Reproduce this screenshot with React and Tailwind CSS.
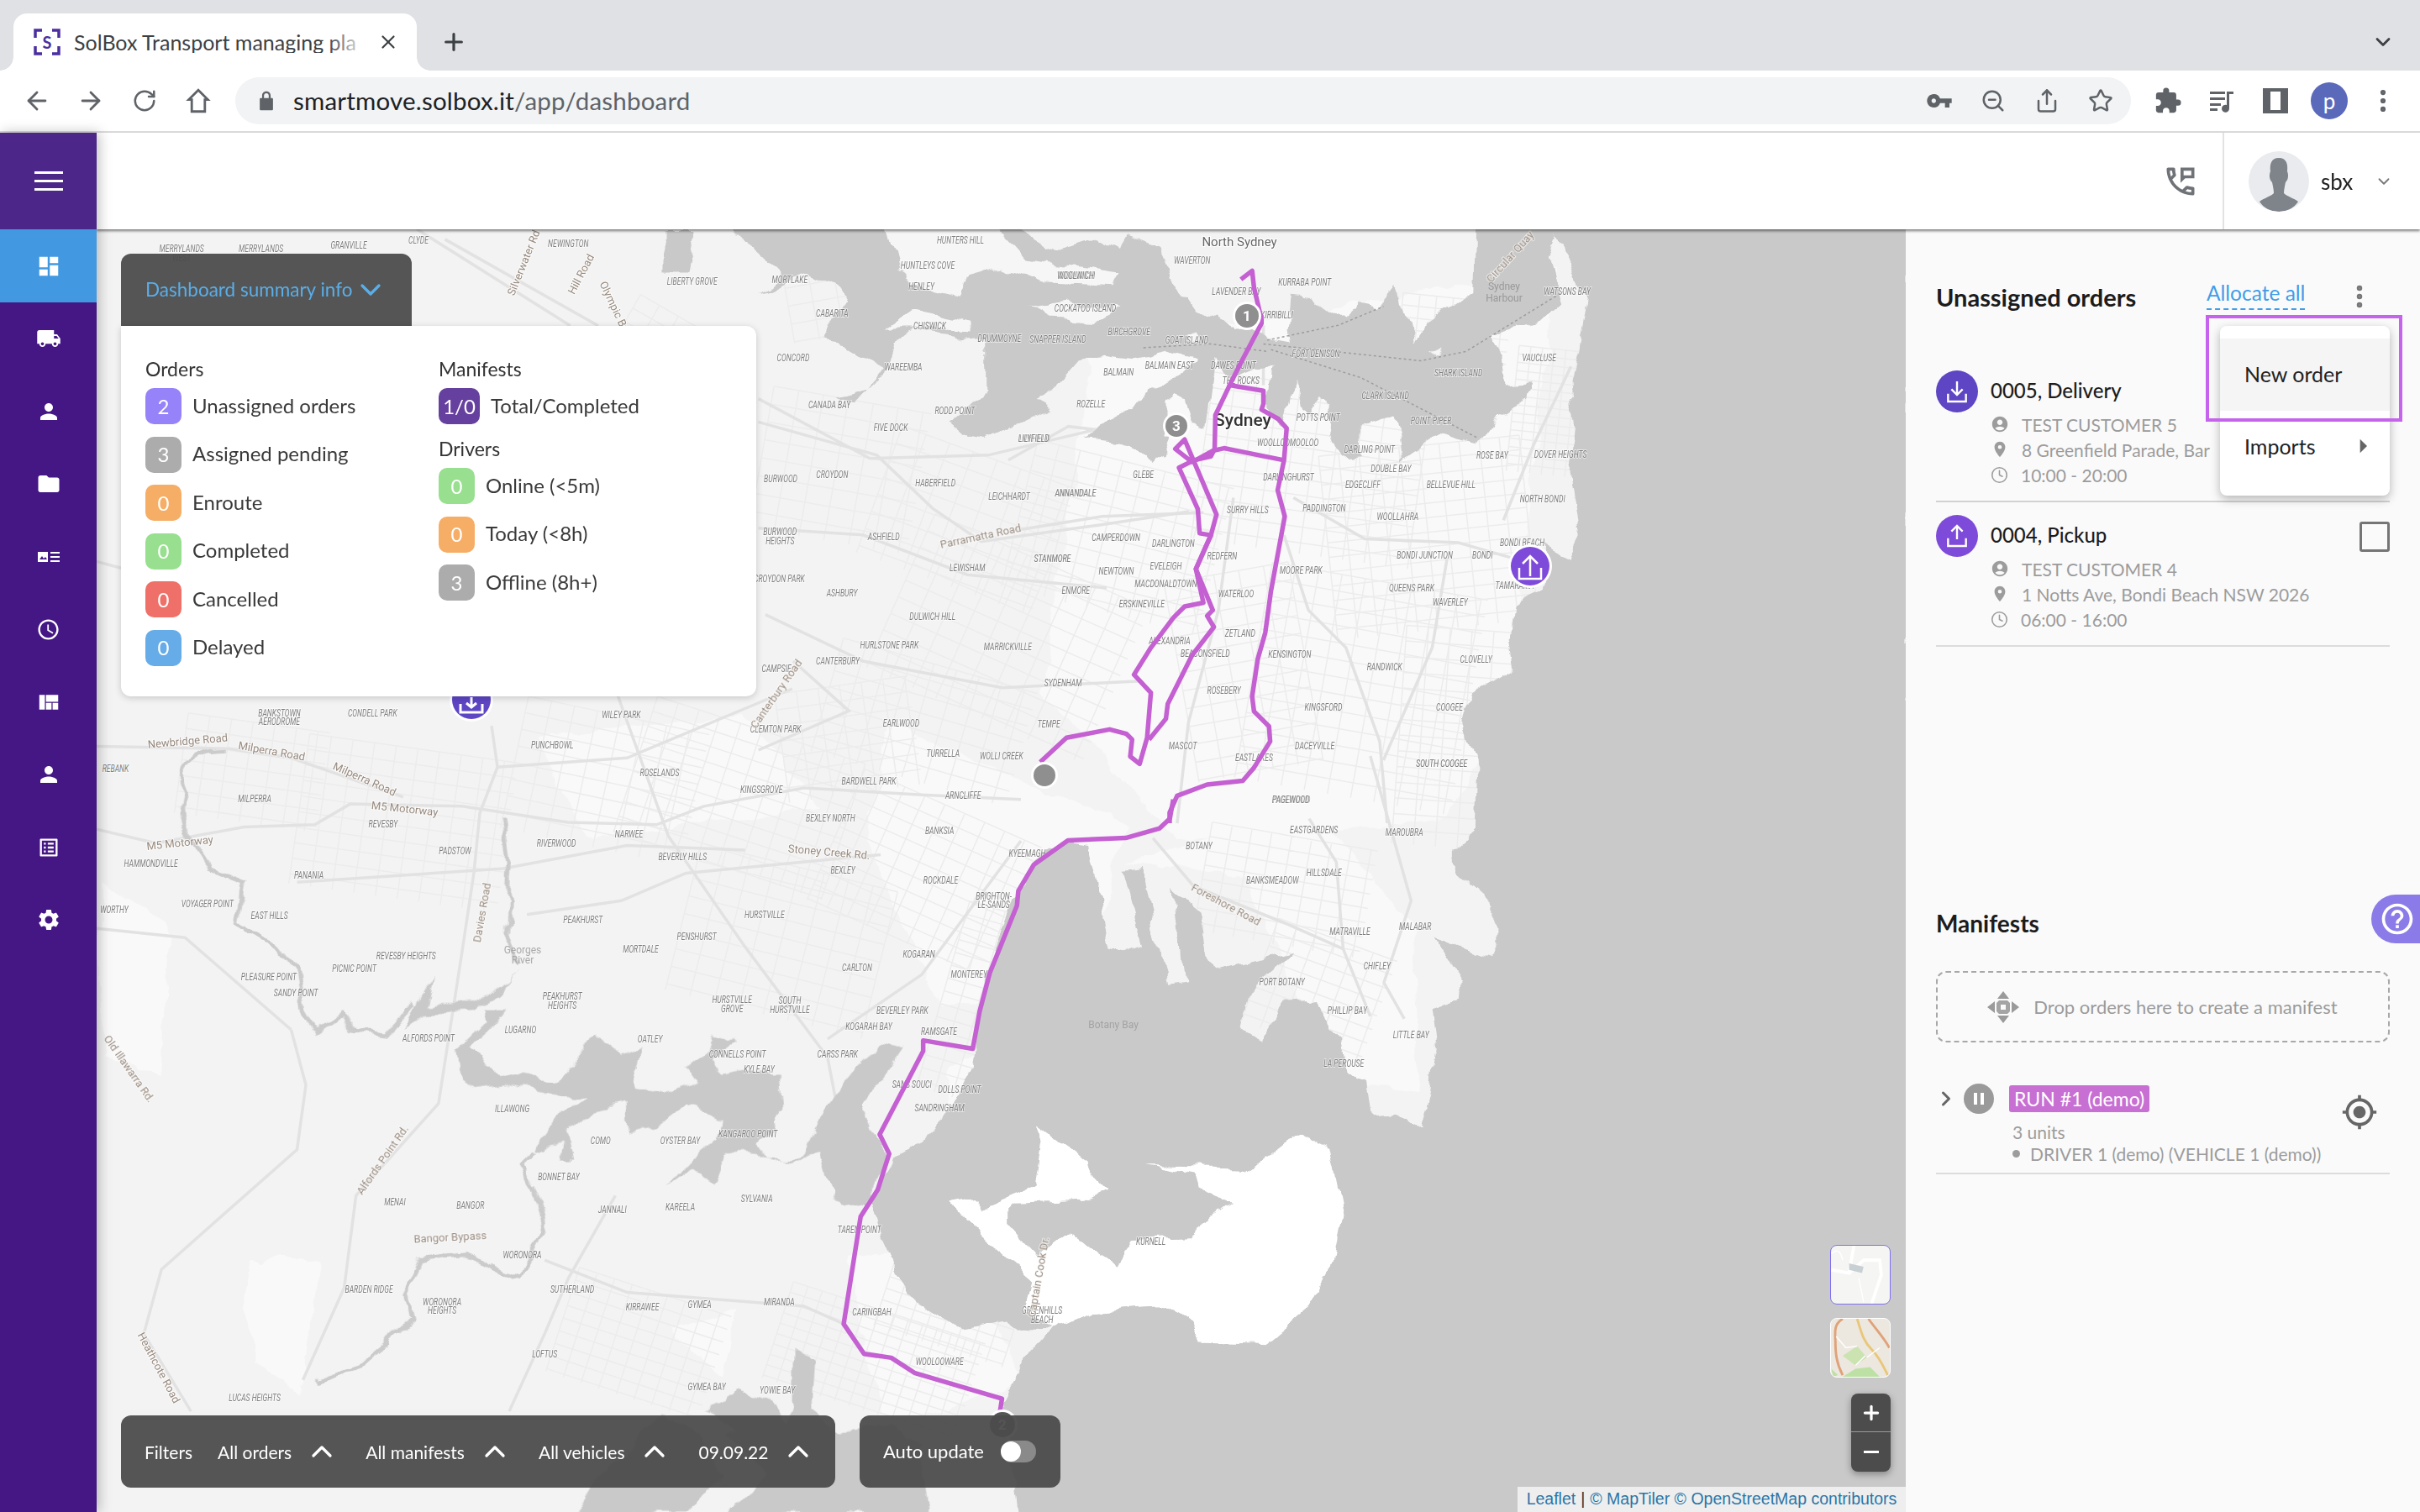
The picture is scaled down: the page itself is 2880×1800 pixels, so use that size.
import {
  ArrowLeft,
  ArrowRight,
  ChevronDown,
  ChevronRight,
  ChevronUp,
  Clock,
  MoreVertical,
  Plus,
  RotateCw,
  Share,
  Star,
  X,
  ZoomOut,
} from 'lucide-react'
import {
  MdAccessTime,
  MdAccountCircle,
  MdArrowRight,
  MdDashboard,
  MdExtension,
  MdFolder,
  MdGpsFixed,
  MdHelpOutline,
  MdLocalShipping,
  MdLocationOn,
  MdOutlineListAlt,
  MdOutlinePermPhoneMsg,
  MdPause,
  MdPerson,
  MdSettings,
  MdViewQuilt,
  MdVpnKey,
} from 'react-icons/md'

// map pieces are kept in the coordinates they were measured in, each set has its own transform
const frames = {
  north: { x: 1200, y: 280, sx: 0.4464, sy: 0.4464 },
  south: { x: 115, y: 820, sx: 0.7015, sy: 0.5485 },
  bay: { x: 1000, y: 900, sx: 0.8087, sy: 0.574 },
  west: { x: 115, y: 273, sx: 0.829, sy: 0.3954 },
  hacking: { x: 100, y: 1440, sx: 0.765, sy: 0.3333 },
}

const frameTransform = (name) => {
  const f = frames[name]
  return `translate(${f.x} ${f.y}) scale(${f.sx} ${f.sy})`
}

const water = {
  north: [
    'M1460,5 L1500,70 L1545,170 L1530,260 L1500,380 L1510,520 L1495,640 L1525,800 L1495,860 L1430,830 L1420,950 L1345,985 L1335,1060 L1350,1150 L1300,1180 L1230,1230 L1210,1300 L1250,1430 L1245,1590 L2400,1590 L2400,-60 L1462,-60 Z',
    'M-60,130 L60,185 L130,150 L240,130 L300,110 L290,50 L310,0 L400,30 L440,120 L480,190 L560,215 L610,260 L650,250 L670,270 L750,285 L745,250 L755,165 L820,170 L890,225 L935,185 L985,195 L1040,130 L1080,290 L1100,245 L1180,190 L1235,150 L1240,-60 L1462,-60 L1460,5 L1440,60 L1470,190 L1440,215 L1400,235 L1290,265 L1320,330 L1330,400 L1395,395 L1385,440 L1300,480 L1250,560 L1150,535 L1090,570 L1045,600 L1025,480 L940,510 L945,585 L890,590 L830,430 L800,490 L770,385 L740,500 L690,460 L700,340 L670,345 L590,380 L550,320 L530,470 L525,520 L490,510 L470,430 L450,410 L420,430 L420,500 L410,560 L380,610 L350,545 L215,540 L280,485 L340,470 L390,400 L470,370 L500,335 L420,310 L330,330 L260,320 L190,330 L130,400 L60,440 L0,470 L-60,450 Z',
  ],
  west: [
    'M810,0 L860,0 L850,130 L810,130 Z',
    'M890,-30 L950,60 L985,130 L950,200 L1020,130 L1060,170 L1075,220 L1045,340 L1075,350 L1130,420 L1110,480 L1060,500 L1090,520 L1135,430 L1150,330 L1170,300 L1190,320 L1240,330 L1290,320 L1300,290 L1380,270 L1450,300 L1500,310 L1568,380 L1600,300 L1568,200 L1520,190 L1470,160 L1480,70 L1440,30 L1380,70 L1300,-30 Z',
    'M1225,580 L1300,440 L1340,420 L1310,470 L1370,540 L1280,630 L1250,620 Z',
    'M1420,630 L1480,590 L1540,620 L1530,690 L1470,640 Z',
  ],
  south: [
    'M620,850 L610,790 L650,740 L665,720 L660,690 L700,690 L670,740 L635,780 L660,830 L740,845 L790,850 L820,800 L840,750 L870,780 L890,800 L925,780 L910,830 L915,870 L960,880 L1020,855 L1000,820 L1040,780 L1050,745 L1085,770 L1040,800 L1060,840 L1100,830 L1160,830 L1165,920 L1120,990 L1140,1020 L1200,1010 L1240,905 L1265,860 L1290,820 L1340,760 L1365,770 L1340,850 L1300,900 L1340,1010 L1300,1130 L1250,1110 L1230,1010 L1180,1020 L1110,1010 L1070,1010 L1050,1080 L1010,1040 L965,1085 L1010,1020 L1050,980 L1060,930 L1000,900 L950,950 L905,965 L900,900 L840,915 L800,960 L810,1020 L790,1020 L795,985 L740,1005 L790,920 L830,885 L770,880 L700,860 L640,870 Z',
    'M520,740 L545,680 L570,620 L560,680 L640,680 L700,640 L720,610 L690,660 L640,695 L560,700 Z',
  ],
  bay: [
    'M935,-10 L940,100 L958,120 L905,190 L905,240 L960,310 L960,415 L870,370 L912,470 L910,510 L870,530 L878,600 L870,690 L855,780 L820,740 L782,745 L775,670 L745,655 L738,590 L715,560 L700,500 L660,505 L620,590 L595,568 L610,470 L665,405 L548,445 L530,320 L490,270 L505,470 L480,475 L445,235 L415,240 L445,395 L420,410 L395,400 L365,185 L335,178 L285,225 L262,285 L220,450 L205,530 L195,640 L150,760 L120,800 L75,825 L45,930 L100,1120 L170,1185 L245,1170 L260,1185 L310,1190 L270,1260 L240,1340 L262,1590 L1600,1590 L1600,-10 Z',
  ],
  hacking: [
    'M1000,1090 L1060,950 L1000,800 L1020,790 L960,720 L1000,690 L1010,640 L1060,680 L1090,760 L1100,700 L1100,500 L1140,540 L1135,720 L1180,800 L1200,780 L1260,750 L1270,800 L1300,840 L1320,1090 Z',
    'M760,1090 L790,980 L900,720 L960,790 L990,960 L940,1090 Z',
  ],
}

// peninsulas and islands that sit on top of the water shapes
const landOverWater = {
  west: [
    'M1130,-30 L1280,-30 L1330,90 L1400,110 L1470,130 L1460,170 L1360,160 L1300,110 L1250,140 L1240,200 L1200,180 L1150,130 Z',
    'M1130,300 L1170,240 L1260,280 L1260,310 L1170,300 Z',
    'M1340,230 L1400,215 L1470,240 L1440,270 L1370,265 Z',
  ],
  north: [
    'M160,205 L205,190 L250,210 L230,235 L175,230 Z',
    'M470,272 L495,265 L510,285 L480,295 Z',
    'M1120,300 L1150,295 L1145,320 Z',
  ],
}

const kurnell =
  'M160,925 L205,915 L205,940 L290,890 L300,800 L290,765 L360,835 L365,860 L395,905 L360,930 L250,935 L250,975 L290,1040 L340,985 L370,1020 L405,1050 L430,1000 L515,995 L575,930 L530,905 L525,870 L450,850 L600,855 L650,800 L680,780 L720,810 L740,950 L725,1060 L690,1150 L630,1220 L530,1215 L520,1180 L470,1140 L370,1150 L310,1190 L270,1150 L280,1085 L225,1020 L180,960 Z'

const rivers = {
  south: [
    'M225,130 C150,130 130,170 150,230 C140,280 150,330 190,390 L250,420 L240,510 L300,550 L340,620 L350,700 L370,745 L410,710 L430,745 L490,755 L540,680',
    'M720,600 L695,530 L700,370 L690,280',
    'M740,1005 L720,1030 L745,1100 L760,1170 L720,1280 L620,1230 L550,1240 L520,1320 L530,1370 L440,1470 L370,1500',
  ],
}

const roads = {
  south: [
    'M0,305 L100,335 L250,300 L370,295 L430,250 L620,255 L800,290 L950,295 L1030,255 L1200,215 L1400,230 L1568,240',
    'M0,125 L225,130 L330,150 L520,235',
    'M670,80 L680,170 L650,270 L640,400 L620,570 L580,900 L440,1100 L420,1300 L350,1500',
    'M680,170 L900,150 L1180,0',
    'M880,0 L970,320 L1100,560 L1240,800 L1270,1000',
    'M730,490 L890,460 L1000,400 L1330,360',
    'M330,740 L355,860 L340,1000 L110,1260 L80,1400 L160,1568',
    'M1568,330 L1400,620 L1240,760',
    'M880,1100 L800,1280 L760,1400 L700,1568',
    'M760,1240 L900,1310 L1200,1340 L1270,1380',
    'M0,520 L150,540 L330,740',
    'M340,420 L690,390 L900,340 L1100,350',
  ],
  west: [
    'M950,580 L1120,680 L1200,840 L1270,940 L1440,890 L1568,850',
    'M950,900 L1100,920 L1250,1040 L1450,1080',
    'M460,0 L680,290',
    'M500,30 L720,290',
    'M950,510 L1110,690 L1280,680 L1440,600',
    'M960,1160 L1100,1300 L1300,1380 L1500,1360',
    'M1000,1300 L1080,1450 L950,1568',
    'M0,1000 L35,1020',
  ],
  north: [
    'M735,800 L800,1000 L900,1100 L990,1350 L1010,1568',
    'M760,700 L950,810 L1200,820 L1340,860',
    'M680,240 L680,400',
    'M600,700 L560,1000 L480,1300 L450,1568',
    'M0,790 L250,750 L520,740',
    'M0,600 L160,510 L420,540',
    'M1170,860 L1130,1100 L1000,1400',
    'M1500,350 L1400,560 L1320,760',
  ],
  bay: [
    'M460,170 L520,270 L660,350 L740,400 L780,540',
    'M690,130 L730,220 L740,400',
    'M780,0 L840,300 L800,470 L830,545',
  ],
}

const ferries = [
  'M680,290 L1100,335 L1220,310 L1480,150',
  'M700,305 L940,380 L1250,540',
  'M690,280 L880,240 L1000,190',
  'M360,300 L540,290 L690,310',
]

// suburbs: centre x, centre y, width, height, angle, street spacing
const suburbs = [
  [1560, 560, 260, 200, 8, 26],
  [1700, 640, 240, 220, -6, 24],
  [1620, 820, 260, 260, 10, 28],
  [1750, 880, 170, 260, 4, 26],
  [1480, 800, 150, 240, -10, 30],
  [1330, 640, 240, 180, 14, 26],
  [1150, 620, 220, 160, 20, 30],
  [1200, 760, 280, 200, 24, 30],
  [1000, 560, 190, 170, 10, 30],
  [1100, 860, 240, 140, 16, 28],
  [1010, 880, 160, 130, -8, 26],
  [880, 950, 260, 170, 18, 26],
  [720, 930, 220, 160, 12, 28],
  [480, 980, 250, 180, 8, 26],
  [300, 920, 170, 120, 8, 26],
  [1100, 1040, 230, 170, 24, 26],
  [930, 1120, 240, 180, 14, 30],
  [1180, 1200, 120, 230, 16, 22],
  [1530, 1060, 200, 130, 10, 24],
  [1570, 1180, 150, 130, 20, 24],
  [1040, 1620, 240, 120, 18, 18],
  [760, 1600, 190, 130, 18, 22],
  [1130, 1560, 160, 90, 18, 20],
  [780, 430, 110, 120, 30, 26],
  [1020, 340, 170, 110, -10, 30],
  [1730, 400, 130, 90, 6, 20],
  [1840, 490, 80, 150, 6, 14],
]

const streetPath = ([cx, cy, w, h, , gap]) => {
  let d = ''
  for (let x = cx - w / 2; x <= cx + w / 2; x += gap) d += `M${x},${cy - h / 2} L${x},${cy + h / 2} `
  for (let y = cy - h / 2; y <= cy + h / 2; y += gap * 0.72) d += `M${cx - w / 2},${y} L${cx + w / 2},${y} `
  return d
}

const whitePatches = [
  'M1300,420 L1850,320 L1800,800 L1720,980 L1400,1000 L1240,820 Z',
  'M640,880 L880,850 L980,960 L700,1000 Z',
  'M1060,860 L1340,980 L1290,1180 L1120,1200 L1030,1000 Z',
  'M1340,1030 L1560,960 L1680,1100 L1690,1300 L1590,1290 L1480,1040 Z',
  'M1130,1270 L1190,1230 L1200,1500 L1110,1560 Z',
  'M290,1550 L300,1500 L380,1500 L360,1660 L300,1620 Z',
  'M1010,1500 L1150,1470 L1215,1650 L1050,1700 Z',
  'M800,1580 L880,1560 L860,1640 Z',
  'M120,1050 L200,1100 L190,1280 L120,1260 Z',
]

const labels = {
  north: [
    [490, 68, 'WAVERTON'], [182, 107, 'WOOLWICH'], [608, 150, 'LAVENDER BAY'], [790, 126, 'KURRABA POINT'], [205, 196, 'COCKATOO ISLAND'], [716, 212, 'KIRRIBILLI'], [322, 257, 'BIRCHGROVE'], [132, 277, 'SNAPPER ISLAND'], [476, 280, 'GOAT ISLAND'], [820, 315, 'FORT DENISON'], [430, 347, 'BALMAIN EAST'], [600, 347, 'DAWES POINT'], [294, 365, 'BALMAIN'], [620, 387, 'THE ROCKS'], [1200, 368, 'SHARK ISLAND'], [1005, 427, 'CLARK ISLAND'], [220, 451, 'ROZELLE'], [1415, 328, 'VAUCLUSE'], [1490, 150, 'WATSONS BAY'], [826, 487, 'POTTS POINT'], [1127, 494, 'POINT PIPER'], [70, 542, 'LILYFIELD'], [745, 554, 'WOOLLOOMOOLOO'], [963, 571, 'DARLING POINT'], [1290, 587, 'ROSE BAY'], [1472, 584, 'DOVER HEIGHTS'], [1020, 622, 'DOUBLE BAY'], [360, 638, 'GLEBE'], [747, 646, 'DARLINGHURST'], [945, 666, 'EDGECLIFF'], [1180, 666, 'BELLEVUE HILL'], [180, 687, 'ANNANDALE'], [1424, 703, 'NORTH BONDI'], [638, 733, 'SURRY HILLS'], [842, 728, 'PADDINGTON'], [1038, 751, 'WOOLLAHRA'], [287, 806, 'CAMPERDOWN'], [440, 823, 'DARLINGTON'], [1370, 821, 'BONDI BEACH'], [118, 863, 'STANMORE'], [1110, 853, 'BONDI JUNCTION'], [1264, 854, 'BONDI'], [570, 855, 'REDFERN'], [420, 882, 'EVELEIGH'], [288, 897, 'NEWTOWN'], [780, 893, 'MOORE PARK'], [420, 929, 'MACDONALDTOWN'], [1075, 941, 'QUEENS PARK'], [1350, 935, 'TAMARAMA'], [180, 948, 'ENMORE'], [607, 956, 'WATERLOO'], [356, 983, 'ERSKINEVILLE'], [1178, 980, 'WAVERLEY'], [618, 1061, 'ZETLAND'], [430, 1082, 'ALEXANDRIA'], [525, 1115, 'BEACONSFIELD'], [750, 1118, 'KENSINGTON'], [1247, 1132, 'CLOVELLY'], [1003, 1152, 'RANDWICK'], [146, 1193, 'SYDENHAM'], [575, 1215, 'ROSEBERY'], [840, 1258, 'KINGSFORD'], [1176, 1260, 'COOGEE'], [108, 1303, 'TEMPE'], [465, 1362, 'MASCOT'], [817, 1362, 'DACEYVILLE'], [655, 1393, 'EASTLAKES'], [1155, 1408, 'SOUTH COOGEE'], [755, 1506, 'PAGEWOOD'],
  ],
  south: [
    [310, 52, 'BANKSTOWN'], [310, 72, 'AERODROME'], [468, 53, 'CONDELL PARK'], [890, 57, 'WILEY PARK'], [1152, 88, 'CLEMTON PARK'], [1365, 75, 'EARLWOOD'], [773, 122, 'PUNCHBOWL'], [1436, 140, 'TURRELLA'], [1535, 146, 'WOLLI CREEK'], [32, 174, 'REBANK'], [955, 183, 'ROSELANDS'], [1310, 200, 'BARDWELL PARK'], [1128, 219, 'KINGSGROVE'], [1470, 231, 'ARNCLIFFE'], [268, 238, 'MILPERRA'], [1245, 281, 'BEXLEY NORTH'], [486, 294, 'REVESBY'], [1430, 308, 'BANKSIA'], [903, 316, 'NARWEE'], [780, 335, 'RIVERWOOD'], [608, 352, 'PADSTOW'], [994, 364, 'BEVERLY HILLS'], [92, 380, 'HAMMONDVILLE'], [1266, 394, 'BEXLEY'], [360, 404, 'PANANIA'], [1432, 416, 'ROCKDALE'], [1522, 450, 'BRIGHTON-'], [1522, 469, 'LE-SANDS'], [188, 466, 'VOYAGER POINT'], [30, 479, 'WORTHY'], [293, 492, 'EAST HILLS'], [1133, 490, 'HURSTVILLE'], [825, 501, 'PEAKHURST'], [1018, 537, 'PENSHURST'], [923, 566, 'MORTDALE'], [1395, 577, 'KOGARAN'], [525, 579, 'REVESBY HEIGHTS'], [1290, 606, 'CARLTON'], [437, 608, 'PICNIC POINT'], [1480, 620, 'MONTEREY'], [292, 626, 'PLEASURE POINT'], [338, 660, 'SANDY POINT'], [790, 667, 'PEAKHURST'], [790, 687, 'HEIGHTS'], [1078, 674, 'HURSTVILLE'], [1078, 694, 'GROVE'], [1176, 676, 'SOUTH'], [1176, 696, 'HURSTVILLE'], [1367, 699, 'BEVERLEY PARK'], [1310, 732, 'KOGARAH BAY'], [719, 741, 'LUGARNO'], [1429, 744, 'RAMSGATE'], [563, 758, 'ALFORDS POINT'], [939, 761, 'OATLEY'], [1087, 793, 'CONNELLS POINT'], [1257, 793, 'CARSS PARK'], [1124, 825, 'KYLE BAY'], [1383, 858, 'SANS SOUCI'], [1464, 870, 'DOLLS POINT'], [1430, 910, 'SANDRINGHAM'], [705, 912, 'ILLAWONG'], [1105, 967, 'KANGAROO POINT'], [855, 981, 'COMO'], [990, 981, 'OYSTER BAY'], [784, 1060, 'BONNET BAY'], [1120, 1106, 'SYLVANIA'], [506, 1114, 'MENAI'], [634, 1122, 'BANGOR'], [990, 1125, 'KAREELA'], [875, 1131, 'JANNALI'], [1294, 1174, 'TAREN POINT'], [722, 1229, 'WORONORA'], [462, 1303, 'BARDEN RIDGE'], [807, 1304, 'SUTHERLAND'], [1158, 1330, 'MIRANDA'], [586, 1330, 'WORONORA'], [586, 1350, 'HEIGHTS'], [926, 1341, 'KIRRAWEE'], [1023, 1337, 'GYMEA'], [1315, 1352, 'CARINGBAH'], [760, 1444, 'LOFTUS'], [1430, 1460, 'WOOLOOWARE'], [1035, 1515, 'GYMEA BAY'], [1155, 1523, 'YOWIE BAY'], [268, 1539, 'LUCAS HEIGHTS'],
  ],
  bay: [
    [885, 15, 'SOUTH COOGEE'], [663, 91, 'PAGEWOOD'], [697, 153, 'EASTGARDENS'], [830, 159, 'MAROUBRA'], [528, 187, 'BOTANY'], [275, 202, 'KYEEMAGH'], [712, 243, 'HILLSDALE'], [636, 258, 'BANKSMEADOW'], [750, 364, 'MATRAVILLE'], [846, 354, 'MALABAR'], [790, 435, 'CHIFLEY'], [650, 469, 'PORT BOTANY'], [746, 528, 'PHILLIP BAY'], [840, 579, 'LITTLE BAY'], [741, 638, 'LA PEROUSE'], [457, 1007, 'KURNELL'], [297, 1150, 'GREENHILLS'], [297, 1169, 'BEACH'],
  ],
  west: [
    [122, 57, 'MERRYLANDS'], [236, 57, 'MERRYLANDS'], [122, 85, 'WEST'], [362, 47, 'GRANVILLE'], [462, 32, 'CLYDE'], [677, 43, 'NEWINGTON'], [1240, 33, 'HUNTERS HILL'], [1193, 108, 'HUNTLEYS COVE'], [1405, 138, 'WOOLWICH'], [855, 157, 'LIBERTY GROVE'], [995, 152, 'MORTLAKE'], [1184, 173, 'HENLEY'], [1056, 254, 'CABARITA'], [1196, 292, 'CHISWICK'], [1296, 328, 'DRUMMOYNE'], [1000, 386, 'CONCORD'], [1158, 414, 'WAREEMBA'], [1052, 529, 'CANADA BAY'], [1232, 547, 'RODD POINT'], [1140, 598, 'FIVE DOCK'], [1345, 630, 'LILYFIELD'], [982, 750, 'BURWOOD'], [1056, 738, 'CROYDON'], [1204, 764, 'HABERFIELD'], [1310, 803, 'LEICHHARDT'], [1405, 793, 'ANNANDALE'], [981, 911, 'BURWOOD'], [981, 938, 'HEIGHTS'], [1130, 925, 'ASHFIELD'], [1372, 992, 'STANMORE'], [1250, 1018, 'LEWISHAM'], [980, 1053, 'CROYDON PARK'], [1070, 1095, 'ASHBURY'], [1200, 1166, 'DULWICH HILL'], [1138, 1252, 'HURLSTONE PARK'], [1308, 1258, 'MARRICKVILLE'], [1064, 1301, 'CANTERBURY'], [976, 1323, 'CAMPSIE'],
  ],
}

const roadNames = {
  south: [
    [155, 114, 'Newbridge Road', -5], [296, 136, 'Milperra Road', 10], [452, 196, 'Milperra Road', 24], [522, 261, 'M5 Motorway', 6], [142, 335, 'M5 Motorway', -6], [1242, 355, 'Stoney Creek Rd.', 5], [660, 480, 'Davies Road', -80], [490, 1020, 'Alfords Point Rd.', -55], [600, 1191, 'Bangor Bypass', -3], [100, 1470, 'Heathcote Road', 62], [50, 822, 'Old Illawarra Rd.', 55],
  ],
  west: [
    [618, 95, 'Silverwater Rd', -68], [700, 130, 'Hill Road', -62], [740, 235, 'Olympic Bvd', 65], [1270, 925, 'Parramatta Road', -12], [980, 1395, 'Canterbury Road', -55],
  ],
  bay: [[565, 308, 'Foreshore Road', 28], [297, 1075, 'Captain Cook Dr.', -80]],
  north: [[1345, 55, 'Circular Quay', -48]],
}

const routes = {
  north: [
    'M620,118 L650,95 L655,140 L675,225 L675,235 L620,340 L590,400 L680,415 L680,450 L675,465 L720,490 L742,515 L735,600 L718,680 L737,750 L700,950 L685,1060 L665,1130 L650,1230 L655,1270 L695,1310 L698,1350 L655,1420 L625,1455 L530,1465 L450,1495 L430,1540 L430,1568',
    'M590,400 L552,480 L550,570 L540,590 L495,600 L455,620 L505,730 L510,795 L540,800 L500,890 L520,980 L470,990 L440,1020 L380,1100 L335,1172 L380,1220 L370,1340 L350,1410 L325,1390 L330,1345 L315,1330 L270,1318 L155,1340 L85,1405',
    'M735,600 L575,568 L545,575 L490,605 L445,570 L470,545 L555,745 L540,800 L500,890 L545,1000 L530,1015 L548,1045 L490,1120 L425,1250 L420,1290 L375,1345',
  ],
  bay: [
    'M490,90 L485,130 L470,150 L420,170 L335,175 L285,225 L262,280 L260,310 L220,450 L205,530 L195,607 L122,590 L122,612 L58,785 L72,825 L55,900 L30,955 L5,1178 L35,1240 L75,1248 L110,1280 L238,1333 L235,1360',
  ],
}

function MapLabel({ frame, item }) {
  const f = frames[frame]
  const [zx, zy, text] = item
  return (
    <text
      transform={`translate(${f.x + zx * f.sx} ${f.y + zy * f.sy + 4}) scale(0.66 1)`}
      textAnchor="middle"
      fontSize="13"
      fontStyle="italic"
      fill="#7f7f7f"
      stroke="#ffffff"
      strokeWidth="2"
      strokeOpacity="0.6"
      paintOrder="stroke"
    >
      {text}
    </text>
  )
}

function RoadName({ frame, item }) {
  const f = frames[frame]
  const [zx, zy, text, angle] = item
  return (
    <text
      transform={`translate(${f.x + zx * f.sx} ${f.y + zy * f.sy + 4}) rotate(${angle})`}
      textAnchor="middle"
      fontSize="13"
      fill="#97897d"
      stroke="#ffffff"
      strokeWidth="2"
      strokeOpacity="0.7"
      paintOrder="stroke"
    >
      {text}
    </text>
  )
}

function MapMarker({ x, y, r, label, fill = '#8f8f8f' }) {
  return (
    <g>
      <circle cx={x} cy={y} r={r + 3} fill="#ffffff" />
      <circle cx={x} cy={y} r={r} fill={fill} />
      {label && (
        <text x={x} y={y + 6} textAnchor="middle" fontSize="17" fontWeight="700" fill="#ffffff">
          {label}
        </text>
      )}
    </g>
  )
}

function SydneyMap() {
  return (
    <svg viewBox="115 273 2153 1527" className="absolute inset-0 block h-full w-full font-['Roboto',sans-serif]">
      <defs>
        <filter id="coast" filterUnits="userSpaceOnUse" x="0" y="150" width="2400" height="1800">
          <feTurbulence type="fractalNoise" baseFrequency="0.022" numOctaves="4" seed="7" />
          <feDisplacementMap in="SourceGraphic" scale="22" xChannelSelector="R" yChannelSelector="G" />
        </filter>
      </defs>
      <rect x="115" y="273" width="2153" height="1527" fill="#f3f3f3" />
      <g filter="url(#coast)">
        {whitePatches.map((d) => (
          <path key={d} d={d} fill="#f9f9f9" />
        ))}
      </g>
      {suburbs.map((s) => (
        <path
          key={`${s[0]}-${s[1]}`}
          d={streetPath(s)}
          transform={`rotate(${s[4]} ${s[0]} ${s[1]})`}
          fill="none"
          stroke="#ececec"
          strokeWidth="1.5"
        />
      ))}
      {Object.entries(roads).map(([frame, list]) => (
        <g key={frame} transform={frameTransform(frame)}>
          {list.map((d) => (
            <path key={d} d={d} fill="none" stroke="#e2e2e2" strokeWidth="3.5" vectorEffect="non-scaling-stroke" />
          ))}
        </g>
      ))}
      <g filter="url(#coast)">
        {Object.entries(water).map(([frame, list]) => (
          <g key={frame} transform={frameTransform(frame)}>
            {list.map((d) => (
              <path key={d} d={d} fill="#c9c9c9" />
            ))}
          </g>
        ))}
        {Object.entries(landOverWater).map(([frame, list]) => (
          <g key={frame} transform={frameTransform(frame)}>
            {list.map((d) => (
              <path key={d} d={d} fill="#f6f6f6" />
            ))}
          </g>
        ))}
        <g transform={frameTransform('south')}>
          {rivers.south.map((d) => (
            <path key={d} d={d} fill="none" stroke="#cbcbcb" strokeWidth="5" vectorEffect="non-scaling-stroke" />
          ))}
        </g>
        <g transform={frameTransform('bay')}>
          <path d={kurnell} fill="#ffffff" />
        </g>
      </g>
      <g transform={frameTransform('north')}>
        {ferries.map((d) => (
          <path key={d} d={d} fill="none" stroke="#9d9d9d" strokeWidth="1.5" strokeDasharray="3 3" vectorEffect="non-scaling-stroke" />
        ))}
      </g>
      {Object.entries(labels).map(([frame, list]) =>
        list.map((item) => <MapLabel key={`${frame}-${item[2]}-${item[0]}`} frame={frame} item={item} />)
      )}
      {Object.entries(roadNames).map(([frame, list]) =>
        list.map((item) => <RoadName key={`${frame}-${item[2]}-${item[0]}`} frame={frame} item={item} />)
      )}
      <text x="1475" y="293" textAnchor="middle" fontSize="15" fill="#666666" stroke="#ffffff" strokeWidth="2" paintOrder="stroke">North Sydney</text>
      <text x="1790" y="345" textAnchor="middle" fontSize="12" fill="#999999">Sydney</text>
      <text x="1790" y="359" textAnchor="middle" fontSize="12" fill="#999999">Harbour</text>
      <text x="1325" y="1224" textAnchor="middle" fontSize="12" fill="#a3a3a3">Botany Bay</text>
      <text x="622" y="1135" textAnchor="middle" fontSize="12" fill="#aaaaaa">Georges</text>
      <text x="622" y="1147" textAnchor="middle" fontSize="12" fill="#aaaaaa">River</text>
      <text x="1479" y="507" textAnchor="middle" fontSize="21" fontWeight="500" fill="#333333" stroke="#ffffff" strokeWidth="3" paintOrder="stroke">Sydney</text>
      {Object.entries(routes).map(([frame, list]) => (
        <g key={frame} transform={frameTransform(frame)}>
          {list.map((d) => (
            <path key={d} d={d} fill="none" stroke="#c460d2" strokeWidth="5.5" strokeLinejoin="round" vectorEffect="non-scaling-stroke" />
          ))}
        </g>
      ))}
      <MapMarker x={1484} y={376} r={14} label="1" />
      <MapMarker x={1400} y={507} r={13} label="3" />
      <MapMarker x={1243} y={923} r={13} />
      <MapMarker x={1193} y={1696} r={15} label="2" fill="#555555" />
      <circle cx="1821" cy="674" r="26" fill="#ffffff" />
      <circle cx="1821" cy="674" r="23" fill="#7e4ad9" />
      <path d="M1821,686 V662 m-9,9 l9,-9 l9,9 M1808,676 v13 h26 v-13" fill="none" stroke="#ffffff" strokeWidth="2.5" />
      <circle cx="561" cy="833" r="26" fill="#ffffff" />
      <circle cx="561" cy="833" r="23" fill="#5e45c4" />
      <path d="M561,830 v12 m-6,-5 l6,5 l6,-5 M548,838 v10 h26 v-10" fill="none" stroke="#ffffff" strokeWidth="3" />
    </svg>
  )
}

function StreetThumb() {
  return (
    <svg viewBox="0 0 72 72" className="block h-[71px] w-[72px] rounded-lg border-[1.5px] border-[#7f6ff2] bg-[#f5f5f3]">
      <path d="M28,0 L22,34 L0,30 M22,34 L40,18 L60,18 L62,36 L50,72" fill="none" stroke="#ffffff" strokeWidth="4" />
      <path d="M24,26 L42,30 L40,38 L24,34 Z" fill="#c9d0d3" transform="translate(-2 -4)" />
      <path d="M34,40 L40,70 M0,10 Q10,0 14,18" fill="none" stroke="#ffffff" strokeWidth="1.5" />
    </svg>
  )
}

function OsmThumb() {
  return (
    <svg viewBox="0 0 72 72" className="block h-[71px] w-[72px] rounded-lg border border-white bg-[#ece7df]">
      <path d="M32,34 L44,48 L30,58 L14,46 Z" fill="#cbe3b0" />
      <path d="M14,72 L30,62 L48,60 L60,72 Z" fill="#bde0a5" />
      <path d="M0,62 L8,70 L2,72 Z" fill="#bde0a5" />
      <path d="M32,0 C38,20 40,28 50,38 C60,48 64,58 70,70" fill="none" stroke="#e9c779" strokeWidth="3" />
      <path d="M14,0 C4,6 4,14 5,28 C5,42 6,55 14,70" fill="none" stroke="#e0a278" strokeWidth="3" />
      <path d="M46,0 C56,14 64,22 72,36" fill="none" stroke="#e0a278" strokeWidth="3" />
      <path d="M6,22 L18,36 L32,34 M44,48 L60,36 M30,58 L42,46" fill="none" stroke="#ffffff" strokeWidth="1.5" />
    </svg>
  )
}

function ToolbarIcon({ children }) {
  return <div className="flex h-full w-[64px] shrink-0 items-center justify-center text-[#5f6368]">{children}</div>
}

function BrowserChrome() {
  return (
    <div className="shrink-0">
      <div className="flex h-[84px] items-end bg-[#dfe1e5] pl-4">
        <div className="relative flex h-[68px] w-[480px] items-center rounded-t-2xl bg-white pl-6">
          <span className="absolute -left-4 bottom-0 h-4 w-4 bg-[radial-gradient(circle_at_0_0,transparent_15.5px,white_16px)]" />
          <span className="absolute -right-4 bottom-0 h-4 w-4 bg-[radial-gradient(circle_at_100%_0,transparent_15.5px,white_16px)]" />
          <span className="relative flex h-8 w-8 shrink-0 items-center justify-center text-[20px] leading-none font-bold text-[#4b2fa0]">
            <svg viewBox="0 0 32 32" className="absolute inset-0 h-8 w-8">
              <path d="M10,2 H2 V11 M22,2 H30 V11 M2,21 V30 H10 M30,21 V30 H22" fill="none" stroke="#4b2fa0" strokeWidth="3.5" />
            </svg>
            S
          </span>
          <span className="relative ml-4 w-[349px] overflow-hidden text-[25px] leading-none whitespace-nowrap text-[#3c4043]">
            SolBox Transport managing pla
            <span className="absolute inset-y-0 right-0 w-12 bg-gradient-to-r from-transparent to-white" />
          </span>
          <X size={26} strokeWidth={2} className="ml-3 shrink-0 text-[#3c4043]" />
        </div>
        <div className="flex h-[68px] w-[88px] items-center justify-center">
          <Plus size={32} strokeWidth={2.4} className="text-[#3c4043]" />
        </div>
        <div className="ml-auto flex h-[68px] w-[88px] items-center justify-center">
          <ChevronDown size={28} strokeWidth={2.4} className="text-[#3c4043]" />
        </div>
      </div>
      <div className="flex h-[74px] items-start border-b-2 border-[#dcdcdc] bg-white pr-3 pl-3">
        <div className="flex h-[72px] items-center">
          <ToolbarIcon><ArrowLeft size={34} strokeWidth={2} /></ToolbarIcon>
          <ToolbarIcon><ArrowRight size={34} strokeWidth={2} /></ToolbarIcon>
          <ToolbarIcon><RotateCw size={30} strokeWidth={2} /></ToolbarIcon>
          <ToolbarIcon>
            <svg viewBox="0 0 24 24" className="h-[34px] w-[34px]" fill="none" stroke="currentColor" strokeWidth="2">
              <path d="M12,3 L4,11 H6.5 V21 H17.5 V11 H20 Z" />
            </svg>
          </ToolbarIcon>
        </div>
        <div className="mx-3 mt-2 flex h-14 flex-1 items-center rounded-full bg-[#f1f3f4] pr-1 pl-7">
          <svg viewBox="0 0 16 20" className="h-[24px] w-[18px] shrink-0 text-[#5f6368]" fill="currentColor">
            <path d="M8,0 C5.2,0 3.5,2 3.5,4.5 V7 H2 A1,1 0 0 0 1,8 V19 A1,1 0 0 0 2,20 H14 A1,1 0 0 0 15,19 V8 A1,1 0 0 0 14,7 H12.5 V4.5 C12.5,2 10.8,0 8,0 Z M5.5,7 V4.5 C5.5,3 6.5,2 8,2 C9.5,2 10.5,3 10.5,4.5 V7 Z" />
          </svg>
          <span className="ml-[23px] text-[29.5px] leading-none tracking-[0.2px] whitespace-nowrap text-[#202124]">
            smartmove.solbox.it<span className="text-[#5f6368]">/app/dashboard</span>
          </span>
          <div className="ml-auto flex h-full items-center">
            <ToolbarIcon><MdVpnKey size={32} /></ToolbarIcon>
            <ToolbarIcon><ZoomOut size={30} strokeWidth={2} /></ToolbarIcon>
            <ToolbarIcon><Share size={30} strokeWidth={2} /></ToolbarIcon>
            <ToolbarIcon><Star size={30} strokeWidth={2} /></ToolbarIcon>
          </div>
        </div>
        <div className="flex h-[72px] items-center">
          <ToolbarIcon><MdExtension size={34} /></ToolbarIcon>
          <ToolbarIcon>
            <svg viewBox="0 0 32 32" className="h-8 w-8" fill="currentColor">
              <path d="M2,5 H20 V8 H2 Z M2,12 H20 V15 H2 Z M2,19 H15 V22 H2 Z M2,25 H11 V28 H2 Z M22,5 H30 V8 H25 V25 A4.5,4.5 0 1 1 22,21 Z" />
            </svg>
          </ToolbarIcon>
          <ToolbarIcon>
            <svg viewBox="0 0 30 30" className="h-[30px] w-[30px]" fill="none" stroke="currentColor">
              <path d="M1,1 H29 V29 H1 Z" strokeWidth="2" />
              <path d="M21,1 H29 V29 H21 Z M1,1 H9 V29 H1 Z" fill="currentColor" strokeWidth="0" />
              <path d="M1,1 H29 V4 H1 Z M1,26 H29 V29 H1 Z" fill="currentColor" strokeWidth="0" />
            </svg>
          </ToolbarIcon>
          <ToolbarIcon>
            <span className="flex h-11 w-11 items-center justify-center rounded-full bg-[#5b69bb] text-[26px] leading-none text-white">p</span>
          </ToolbarIcon>
          <ToolbarIcon><MoreVertical size={34} strokeWidth={2.4} /></ToolbarIcon>
        </div>
      </div>
    </div>
  )
}

function SideIcon({ children, active }) {
  return (
    <div className={active ? 'flex h-[87px] items-center justify-center bg-[#4299e1] text-white' : 'flex h-[86.5px] items-center justify-center text-white'}>
      {children}
    </div>
  )
}

function Sidebar() {
  return (
    <aside className="relative z-20 flex w-[115px] shrink-0 flex-col bg-[#441785] shadow-[3px_0_14px_rgba(0,0,0,0.25)]">
      <div className="flex h-[115px] items-center justify-center bg-[#4c2689]">
        <svg viewBox="0 0 34 24" className="h-6 w-[34px]" fill="#ffffff">
          <rect width="34" height="3" />
          <rect y="10" width="34" height="3" />
          <rect y="20" width="34" height="3" />
        </svg>
      </div>
      <SideIcon active><MdDashboard size={30} /></SideIcon>
      <SideIcon><MdLocalShipping size={30} /></SideIcon>
      <SideIcon><MdPerson size={30} /></SideIcon>
      <SideIcon><MdFolder size={30} /></SideIcon>
      <SideIcon>
        <svg viewBox="0 0 26 16" className="h-4 w-[26px]" fill="#ffffff">
          <path d="M0,2 H12 V14 H0 Z" />
          <path d="M2,11 L5,7 L7,10 L9,8 L11,11 Z" fill="#441785" />
          <path d="M15,2 H26 V4 H15 Z M15,7 H26 V9 H15 Z M15,12 H26 V14 H15 Z" />
        </svg>
      </SideIcon>
      <SideIcon><MdAccessTime size={29} /></SideIcon>
      <SideIcon><MdViewQuilt size={30} /></SideIcon>
      <SideIcon><MdPerson size={30} /></SideIcon>
      <SideIcon><MdOutlineListAlt size={28} /></SideIcon>
      <SideIcon><MdSettings size={30} /></SideIcon>
    </aside>
  )
}

function TopBar() {
  return (
    <header className="relative z-10 flex h-[115px] shrink-0 items-center justify-end bg-white shadow-[0_2px_3px_rgba(0,0,0,0.5)]">
      <MdOutlinePermPhoneMsg size={44} className="mr-[28px] text-[#6f7276]" />
      <div className="flex h-full w-[235px] items-center border-l-2 border-[#e2e2e2] pl-[29px]">
        <svg viewBox="0 0 72 72" className="h-[72px] w-[72px] shrink-0 rounded-full bg-[#e9ebee]">
          <path d="M36,8 C27,8 25,15 26,24 C24,29 25,34 28,37 C29,42 30,46 30,50 C26,54 18,56 13,60 C18,68 27,72 36,72 C45,72 54,68 59,60 C54,56 46,54 42,50 C42,46 43,42 44,37 C47,34 48,29 46,24 C47,15 45,8 36,8 Z" fill="#7e848a" />
        </svg>
        <span className="ml-[14px] text-[26px] leading-none text-[#222222]">sbx</span>
        <ChevronDown size={22} strokeWidth={2} className="ml-[26px] text-[#777777]" />
      </div>
    </header>
  )
}

function CountRow({ value, label, color, wide }) {
  return (
    <div className="flex h-[43px] items-center">
      <span className={`flex h-[43px] items-center justify-center rounded-[10px] text-[24px] leading-none text-white ${wide ? 'w-[49px]' : 'w-[43px]'} ${color}`}>
        {value}
      </span>
      <span className="mb-[2px] ml-[13px] text-[24px] leading-none whitespace-nowrap text-[#3a3a3a]">{label}</span>
    </div>
  )
}

function SummaryPanel() {
  return (
    <div className="absolute top-[29px] left-[29px] z-10 w-[756px]">
      <div className="flex h-[86px] w-[346px] items-center rounded-t-xl bg-[#4c4c4c]/95 pl-[29px]">
        <span className="text-[22.5px] leading-none whitespace-nowrap text-[#5aaee8]">Dashboard summary info</span>
        <ChevronDown size={40} strokeWidth={2} className="ml-[2px] text-[#5aaee8]" />
      </div>
      <div className="flex h-[441px] rounded-xl rounded-tl-none bg-white pt-[37px] pl-[29px] shadow-[0_2px_8px_rgba(0,0,0,0.18)]">
        <div className="w-[349px]">
          <div className="h-7 text-[23px] leading-7 text-[#333333]">Orders</div>
          <div className="mt-[9px] flex flex-col gap-[14.6px]">
            <CountRow value="2" label="Unassigned orders" color="bg-[#9683fa]" />
            <CountRow value="3" label="Assigned pending" color="bg-[#acacac]" />
            <CountRow value="0" label="Enroute" color="bg-[#f6ae66]" />
            <CountRow value="0" label="Completed" color="bg-[#98df8f]" />
            <CountRow value="0" label="Cancelled" color="bg-[#ef7068]" />
            <CountRow value="0" label="Delayed" color="bg-[#65ace8]" />
          </div>
        </div>
        <div>
          <div className="h-7 text-[23px] leading-7 text-[#333333]">Manifests</div>
          <div className="mt-[9px]">
            <CountRow value="1/0" label="Total/Completed" color="bg-[#66409e]" wide />
          </div>
          <div className="mt-[15px] h-7 text-[23px] leading-7 text-[#333333]">Drivers</div>
          <div className="mt-[9px] flex flex-col gap-[14.6px]">
            <CountRow value="0" label="Online (<5m)" color="bg-[#98df8f]" />
            <CountRow value="0" label="Today (<8h)" color="bg-[#f6ae66]" />
            <CountRow value="3" label="Offline (8h+)" color="bg-[#acacac]" />
          </div>
        </div>
      </div>
    </div>
  )
}

function FilterItem({ label }) {
  return (
    <div className="flex items-center">
      <span className="text-[21px] leading-none whitespace-nowrap text-white">{label}</span>
      <ChevronUp size={40} strokeWidth={2} className="mr-[32px] ml-[16px] text-white" />
    </div>
  )
}

function FilterBar() {
  return (
    <div className="absolute bottom-[29px] left-[29px] z-10 flex gap-[29px]">
      <div className="flex h-[86px] w-[850px] items-center rounded-xl bg-[#4c4c4c]/95 pl-[28px]">
        <span className="mr-[30px] text-[21px] leading-none text-white">Filters</span>
        <FilterItem label="All orders" />
        <FilterItem label="All manifests" />
        <FilterItem label="All vehicles" />
        <FilterItem label="09.09.22" />
      </div>
      <div className="flex h-[86px] w-[239px] items-center rounded-xl bg-[#4c4c4c]/95 pl-[28px]">
        <span className="text-[22px] leading-none whitespace-nowrap text-white">Auto update</span>
        <span className="ml-5 flex h-[26px] w-[42px] items-center rounded-full bg-[#8a8a8a]">
          <span className="h-[24px] w-[24px] rounded-full bg-white" />
        </span>
      </div>
    </div>
  )
}

function MapControls() {
  return (
    <div className="absolute right-[18px] bottom-[48px] z-10 flex flex-col items-end">
      <StreetThumb />
      <div className="mt-[16px]"><OsmThumb /></div>
      <div className="mt-[19px] flex w-[47px] flex-col overflow-hidden rounded-lg bg-[#4c4c4c] text-white shadow-[0_3px_8px_rgba(0,0,0,0.35)]">
        <div className="flex h-[46px] items-center justify-center border-b border-[#9a9a9a]"><Plus size={26} strokeWidth={3} /></div>
        <div className="flex h-[47px] items-center justify-center"><span className="h-[3px] w-[18px] bg-white" /></div>
      </div>
    </div>
  )
}

function Attribution() {
  return (
    <div className="absolute right-0 bottom-0 z-10 flex h-[30px] w-[462px] items-center justify-center bg-[#eeeeee] font-['Liberation_Sans',sans-serif] text-[19.5px] leading-none whitespace-nowrap text-[#2a76a8]">
      <span>Leaflet</span>
      <span className="mx-[6px] text-[#333333]">|</span>
      <span>© MapTiler © OpenStreetMap contributors</span>
    </div>
  )
}

function OrderCard({ number, kind, color, customer, address, time, up, checkbox, first }) {
  return (
    <div className={first ? 'flex gap-[15px] border-b-2 border-[#d2d2d2] pb-[16px]' : 'mt-[15px] flex gap-[15px] border-b-2 border-[#dcdcdc] pb-[16px]'}>
      <span className={`flex h-[50px] w-[50px] shrink-0 items-center justify-center rounded-full ${color}`}>
        <svg viewBox="0 0 24 24" className="h-[32px] w-[32px]" fill="none" stroke="#ffffff" strokeWidth="1.8">
          <path d={up ? 'M12,15 V3 M7,8 L12,3 L17,8' : 'M12,3 V15 M7,10 L12,15 L17,10'} />
          <path d="M4,14 V21 H20 V14" />
        </svg>
      </span>
      <div className="min-w-0 flex-1">
        <div className="flex h-[49px] items-center justify-between">
          <span className="mb-[1px] text-[24px] leading-none font-medium text-[#1c1c1c]">{number}, {kind}</span>
          {checkbox && <span className="mt-[2px] h-[36px] w-[36px] rounded-[3px] border-[3px] border-[#757575]" />}
        </div>
        <div className="flex h-[30px] items-center gap-[15px] text-[21px] leading-none whitespace-nowrap text-[#9c9c9c]">
          <MdAccountCircle size={22} className="shrink-0" />
          <span>{customer}</span>
        </div>
        <div className="flex h-[30px] items-center gap-[15px] text-[21px] leading-none whitespace-nowrap text-[#9c9c9c]">
          <MdLocationOn size={22} className="shrink-0" />
          <span>{address}</span>
        </div>
        <div className="flex h-[30px] items-center gap-[15px] text-[21px] leading-none whitespace-nowrap text-[#9c9c9c]">
          <Clock size={21} strokeWidth={1.8} className="shrink-0" />
          <span>{time}</span>
        </div>
      </div>
    </div>
  )
}

function MoveIcon() {
  return (
    <svg viewBox="0 0 40 40" className="h-10 w-10 shrink-0" fill="#9a9a9a">
      <path d="M20,1 L27,10 H13 Z M20,39 L27,30 H13 Z M1,20 L10,13 V27 Z M39,20 L30,13 V27 Z" />
      <path d="M15,12 H25 L28,15 V25 L25,28 H15 L12,25 V15 Z M17,17 V23 H23 V17 Z" fillRule="evenodd" opacity="0.9" />
    </svg>
  )
}

function RightPanel() {
  return (
    <aside className="relative flex w-[612px] shrink-0 flex-col bg-[#fafafa] px-9">
      <div className="mt-[63px] flex h-9 items-center">
        <h2 className="mb-[2px] text-[29px] leading-none font-bold whitespace-nowrap text-[#1c1c1c]">Unassigned orders</h2>
        <span className="absolute top-[64px] left-[358px] border-b-2 border-dashed border-[#3f9de9] pb-[5px] text-[24.5px] leading-none whitespace-nowrap text-[#3f9de9]">Allocate all</span>
        <MoreVertical size={34} strokeWidth={2.6} className="absolute top-[63px] left-[523px] text-[#777777]" />
      </div>
      <div className="mt-[69px]">
        <OrderCard
          first
          number="0005"
          kind="Delivery"
          color="bg-[#5e45c4]"
          customer="TEST CUSTOMER 5"
          address="8 Greenfield Parade, Bar"
          time="10:00 - 20:00"
        />
        <OrderCard
          up
          checkbox
          number="0004"
          kind="Pickup"
          color="bg-[#7e4ad9]"
          customer="TEST CUSTOMER 4"
          address="1 Notts Ave, Bondi Beach NSW 2026"
          time="06:00 - 16:00"
        />
      </div>

      <h2 className="mt-[311px] flex h-9 items-center text-[28px] leading-none font-bold text-[#1c1c1c]">Manifests</h2>
      <div className="mt-[39px] flex h-[85px] items-center justify-center gap-[16px] rounded-xl border-2 border-dashed border-[#a8a8a8] pr-[2px]">
        <MoveIcon />
        <span className="text-[22px] leading-none whitespace-nowrap text-[#9a9a9a]">Drop orders here to create a manifest</span>
      </div>
      <div className="mt-[49px] flex border-b-2 border-[#dcdcdc] pb-[8px]">
        <ChevronRight size={28} strokeWidth={2.6} className="mt-[4px] -ml-[2px] shrink-0 text-[#666666]" />
        <span className="mt-0 ml-[7px] flex h-9 w-9 shrink-0 items-center justify-center rounded-full bg-[#9a9a9a] text-white">
          <MdPause size={24} />
        </span>
        <div className="ml-[18px] min-w-0">
          <span className="mt-[2px] block w-fit rounded-[3px] bg-[#c86fd4] px-[6px] py-[4px] text-[23px] leading-[24px] whitespace-nowrap text-white">RUN #1 (demo)</span>
          <div className="ml-1 flex h-[34px] items-end text-[21px] leading-none text-[#9c9c9c]">3 units</div>
          <div className="ml-1 flex h-[30px] items-center text-[21px] leading-none whitespace-nowrap text-[#9c9c9c]">
            <span className="mr-[12px] h-[9px] w-[9px] rounded-full bg-[#9c9c9c]" />
            DRIVER 1 (demo) (VEHICLE 1 (demo))
          </div>
        </div>
        <MdGpsFixed size={44} className="mt-[12px] mr-[14px] ml-auto shrink-0 text-[#666666]" />
      </div>

      {/* floats over the list */}
      <div className="absolute top-[115px] left-[374px] z-10 h-[202px] w-[202px] rounded-lg bg-white py-[15px] shadow-[0_4px_12px_rgba(0,0,0,0.28)]">
        <div className="flex h-[86px] items-center bg-[#f5f5f5] pb-[2px] pl-[29px] text-[25px] leading-none text-[#222222]">New order</div>
        <div className="flex h-[86px] items-center justify-between pr-[12px] pb-[2px] pl-[29px] text-[25px] leading-none text-[#222222]">
          Imports
          <MdArrowRight size={40} className="text-[#666666]" />
        </div>
      </div>
      <div className="absolute top-[102px] left-[357px] z-20 h-[127px] w-[234px] border-[4px] border-[#c563ec]" />
      <div className="absolute top-[792px] right-0 flex h-[58px] w-[58px] items-center justify-center rounded-l-full bg-[#8b7be8] pl-[4px] text-white">
        <MdHelpOutline size={44} />
      </div>
    </aside>
  )
}

export default function App() {
  return (
    <div className="flex h-[1800px] w-[2880px] flex-col overflow-hidden bg-white font-['Lato',sans-serif]">
      <BrowserChrome />
      <div className="flex min-h-0 flex-1">
        <Sidebar />
        <div className="flex min-w-0 flex-1 flex-col">
          <TopBar />
          <div className="flex min-h-0 flex-1">
            <main className="relative min-w-0 flex-1 overflow-hidden">
              <SydneyMap />
              <SummaryPanel />
              <FilterBar />
              <MapControls />
              <Attribution />
            </main>
            <RightPanel />
          </div>
        </div>
      </div>
    </div>
  )
}
